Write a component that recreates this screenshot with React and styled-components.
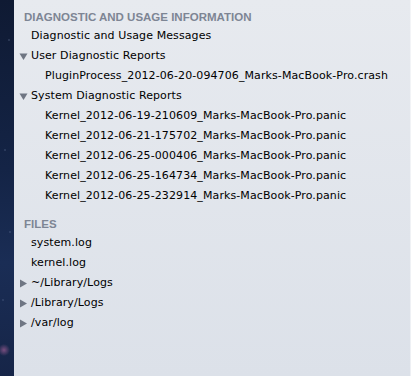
import styled, { createGlobalStyle } from "styled-components";

const GlobalStyle = createGlobalStyle`
  html, body {
    margin: 0;
    padding: 0;
    height: 100%;
    overflow: hidden;
  }
  #root {
    height: 100%;
  }
`;

const Screen = styled.div`
  display: flex;
  width: 411px;
  height: 376px;
  font-family: "DejaVu Sans", "Liberation Sans", sans-serif;
  font-size: 11px;
`;

const SpaceStrip = styled.div`
  width: 14px;
  flex: 0 0 14px;
  background:
    radial-gradient(circle at 4px 350px, rgba(200, 110, 170, 0.55) 0, rgba(200, 110, 170, 0) 6px),
    radial-gradient(circle at 9px 40px, rgba(180, 200, 240, 0.5) 0, rgba(180, 200, 240, 0) 1px),
    radial-gradient(circle at 5px 150px, rgba(180, 200, 240, 0.45) 0, rgba(180, 200, 240, 0) 1px),
    radial-gradient(circle at 10px 232px, rgba(180, 200, 240, 0.45) 0, rgba(180, 200, 240, 0) 1px),
    radial-gradient(circle at 3px 300px, rgba(180, 200, 240, 0.4) 0, rgba(180, 200, 240, 0) 1px),
    linear-gradient(180deg, #0f1a33 0%, #142446 45%, #1a2d55 70%, #162548 100%);
`;

const Sidebar = styled.div`
  flex: 1;
  display: flex;
  flex-direction: column;
  padding-top: 7px;
  background: linear-gradient(180deg, #e7eaef 0%, #dce1e9 100%);
  box-shadow: inset -1px 0 0 rgba(255, 255, 255, 0.5);
`;

const SectionHeader = styled.div`
  height: 19px;
  display: flex;
  align-items: center;
  padding-left: 10px;
  margin-top: ${(p) => (p.$spaced ? "8px" : "0")};
  font-family: "Liberation Sans", Arial, sans-serif;
  font-size: 11.5px;
  font-weight: bold;
  color: #7d8594;
`;

const Row = styled.div`
  height: 20px;
  display: flex;
  align-items: center;
  padding-left: ${(p) => 6 + p.$level * 14}px;
  color: #000;
  letter-spacing: 0.1px;
  white-space: nowrap;
`;

const Toggle = styled.span`
  width: 11px;
  flex: 0 0 11px;
  display: flex;
  align-items: center;
  justify-content: flex-start;
  margin-left: -1px;
  margin-right: 1px;
`;

const Label = styled.span`
  line-height: 20px;
`;

const Arrow = ({ open }) => (
  <svg width="9" height="9" viewBox="0 0 9 9">
    {open ? (
      <polygon points="0.5,1.5 8.5,1.5 4.5,8" fill="#6f7683" />
    ) : (
      <polygon points="1,0.5 8,4.5 1,8.5" fill="#6f7683" />
    )}
  </svg>
);

const Item = ({ level = 0, toggle, children }) => (
  <Row $level={level}>
    <Toggle>{toggle && <Arrow open={toggle === "open"} />}</Toggle>
    <Label>{children}</Label>
  </Row>
);

const kernels = [
  "Kernel_2012-06-19-210609_Marks-MacBook-Pro.panic",
  "Kernel_2012-06-21-175702_Marks-MacBook-Pro.panic",
  "Kernel_2012-06-25-000406_Marks-MacBook-Pro.panic",
  "Kernel_2012-06-25-164734_Marks-MacBook-Pro.panic",
  "Kernel_2012-06-25-232914_Marks-MacBook-Pro.panic",
];

const App = () => {
  return (
    <Screen>
      <GlobalStyle />
      <SpaceStrip />
      <Sidebar>
        <SectionHeader>DIAGNOSTIC AND USAGE INFORMATION</SectionHeader>
        <Item>Diagnostic and Usage Messages</Item>
        <Item toggle="open">User Diagnostic Reports</Item>
        <Item level={1}>PluginProcess_2012-06-20-094706_Marks-MacBook-Pro.crash</Item>
        <Item toggle="open">System Diagnostic Reports</Item>
        {kernels.map((k) => (
          <Item key={k} level={1}>
            {k}
          </Item>
        ))}
        <SectionHeader $spaced>FILES</SectionHeader>
        <Item>system.log</Item>
        <Item>kernel.log</Item>
        <Item toggle="closed">~/Library/Logs</Item>
        <Item toggle="closed">/Library/Logs</Item>
        <Item toggle="closed">/var/log</Item>
      </Sidebar>
    </Screen>
  );
};

export default App;
